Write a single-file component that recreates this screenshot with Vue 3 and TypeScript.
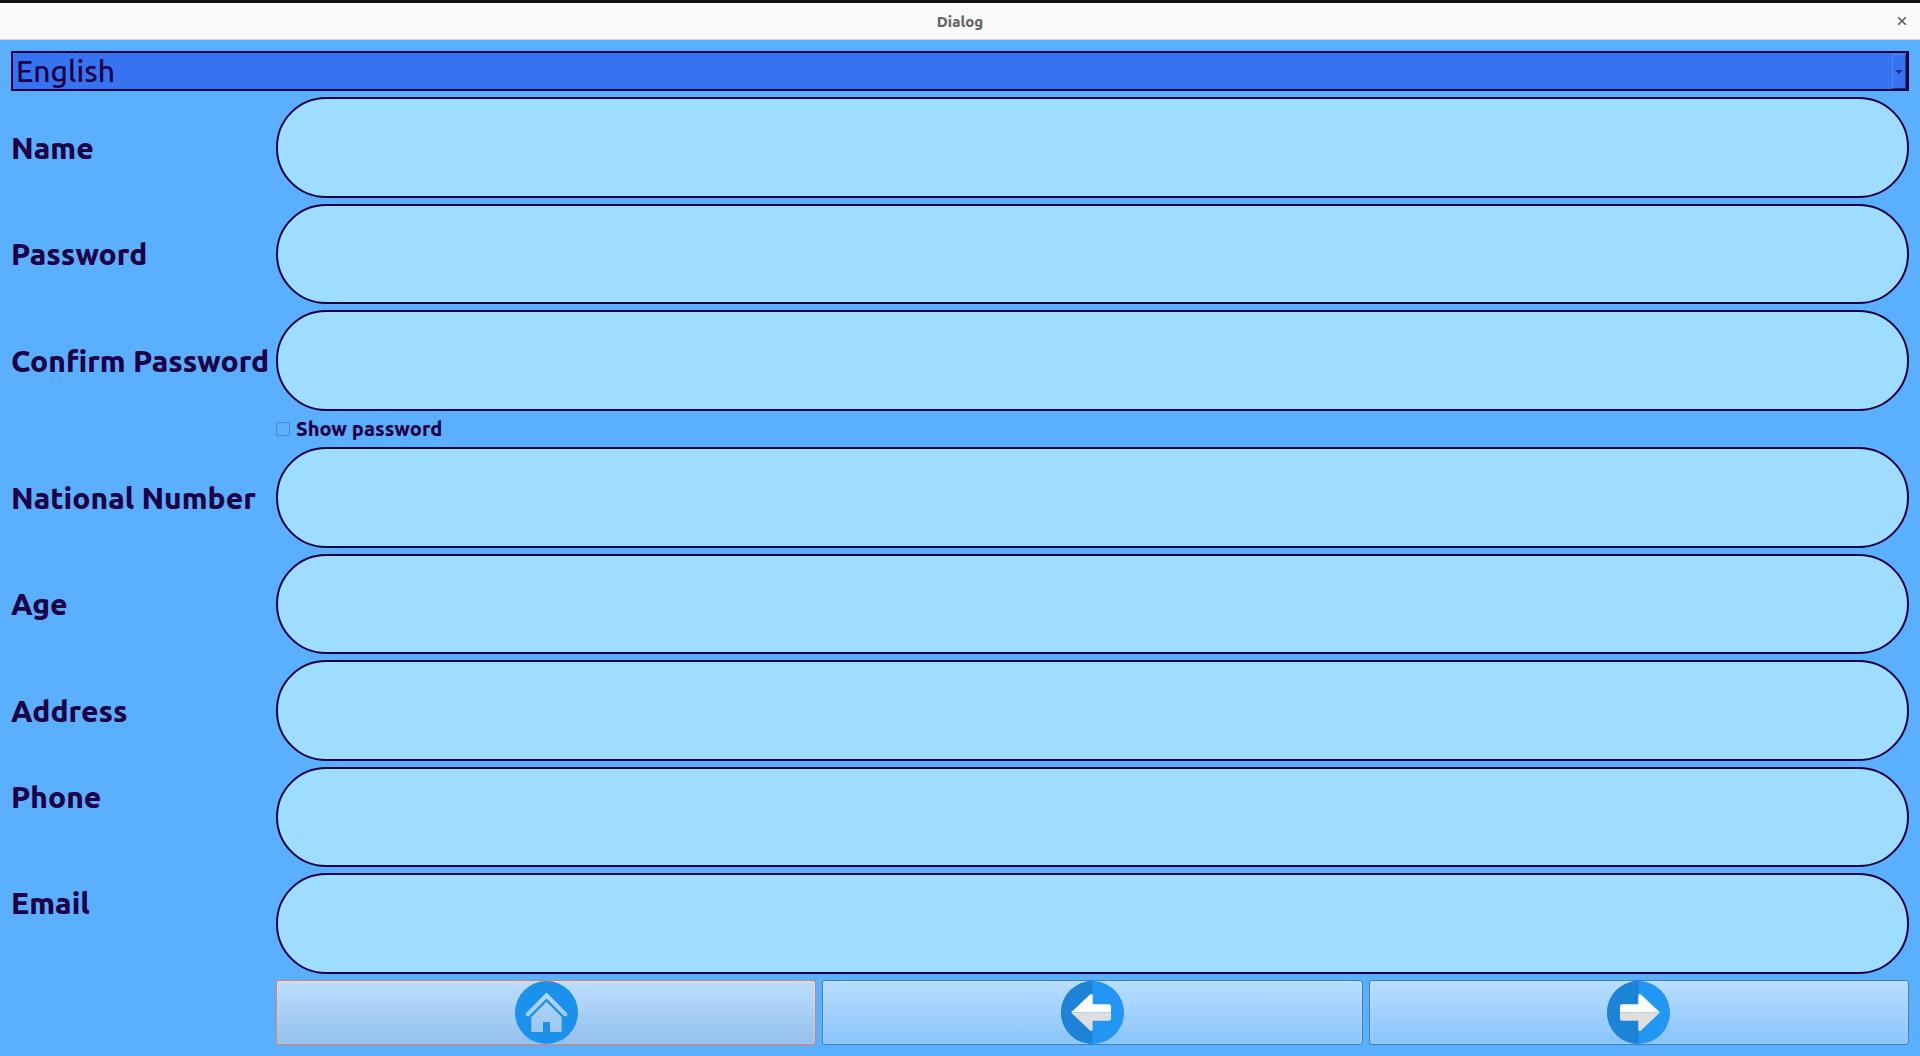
<script setup lang="ts">
import { ref, reactive } from 'vue'

interface Field {
  id: string
  label: string
  secret?: boolean
  raised?: boolean
}

const credentials: Field[] = [
  { id: 'name', label: 'Name' },
  { id: 'password', label: 'Password', secret: true },
  { id: 'confirm', label: 'Confirm Password', secret: true },
]

const details: Field[] = [
  { id: 'national', label: 'National Number' },
  { id: 'age', label: 'Age' },
  { id: 'address', label: 'Address' },
  { id: 'phone', label: 'Phone', raised: true },
  { id: 'email', label: 'Email', raised: true },
]

const language = ref('English')
const showPassword = ref(false)
const values = reactive<Record<string, string>>({})
</script>

<template>
  <div class="window">
    <header class="titlebar">
      <h1 class="title">Dialog</h1>
      <button class="close" type="button" aria-label="Close">
        <svg width="10" height="10" viewBox="0 0 10 10">
          <path d="M1.2 1.2L8.8 8.8M8.8 1.2L1.2 8.8" stroke="#5c5c5c" stroke-width="1.6" />
        </svg>
      </button>
    </header>

    <form class="dialog" @submit.prevent>
      <div class="combo">
        <select v-model="language" class="combo-select" aria-label="Language">
          <option>English</option>
        </select>
        <span class="combo-arrow">
          <svg width="8" height="4" viewBox="0 0 8 4"><path d="M0 0H8L4 4Z" fill="#2a2a86" /></svg>
        </span>
      </div>

      <template v-for="field in credentials" :key="field.id">
        <label class="label" :for="field.id">{{ field.label }}</label>
        <input
          :id="field.id"
          v-model="values[field.id]"
          class="field"
          :type="field.secret && !showPassword ? 'password' : 'text'"
        />
      </template>

      <label class="check">
        <input v-model="showPassword" class="check-box" type="checkbox" />
        <span>Show password</span>
      </label>

      <template v-for="field in details" :key="field.id">
        <label class="label" :class="{ raised: field.raised }" :for="field.id">{{ field.label }}</label>
        <input :id="field.id" v-model="values[field.id]" class="field" type="text" />
      </template>

      <div class="actions">
        <button class="action focused" type="button" aria-label="Home">
          <svg class="icon" viewBox="0 0 63 63">
            <defs>
              <linearGradient id="house" gradientUnits="userSpaceOnUse" x1="0" y1="0" x2="0" y2="63">
                <stop offset="0" stop-color="#bbdcff" />
                <stop offset="1" stop-color="#95c1ee" />
              </linearGradient>
            </defs>
            <circle cx="31.5" cy="31.5" r="31.5" fill="#1a91eb" />
            <path
              d="M12.8 33.2L31.5 14.5L50.2 33.2"
              fill="none"
              stroke="url(#house)"
              stroke-width="4.2"
              stroke-linecap="round"
            />
            <path d="M31.5 20.7L46.7 35.9V51H35V41H28V51H16.3V35.9Z" fill="url(#house)" />
          </svg>
        </button>
        <button class="action" type="button" aria-label="Back">
          <svg class="icon" viewBox="0 0 63 63">
            <circle cx="31.5" cy="31.5" r="31.5" fill="#2196f3" />
            <path d="M31.5 0A31.5 31.5 0 0 0 31.5 63Z" fill="#1d83d6" />
            <path d="M10 31.5L29 13.6Q31.7 12 31.7 15V23.2H48Q50 23.2 50 25.2V31.5Z" fill="#fff" />
            <path d="M10 31.5L29 49.4Q31.7 51 31.7 48V39.8H48Q50 39.8 50 37.8V31.5Z" fill="#dedede" />
          </svg>
        </button>
        <button class="action" type="button" aria-label="Next">
          <svg class="icon" viewBox="0 0 63 63">
            <circle cx="31.5" cy="31.5" r="31.5" fill="#2196f3" />
            <path d="M31.5 0A31.5 31.5 0 0 0 31.5 63Z" fill="#1d83d6" />
            <path d="M53 31.5L34 13.6Q31.3 12 31.3 15V23.2H15Q13 23.2 13 25.2V31.5Z" fill="#fff" />
            <path d="M53 31.5L34 49.4Q31.3 51 31.3 48V39.8H15Q13 39.8 13 37.8V31.5Z" fill="#dedede" />
          </svg>
        </button>
      </div>
    </form>
  </div>
</template>

<style>
body {
  margin: 0;
  background: #5ab0ff;
}
</style>

<style scoped>
.window {
  display: flex;
  flex-direction: column;
  min-height: 100vh;
  box-sizing: border-box;
  border-top: 3px solid #121212;
  background: #5ab0ff;
  color: #1e0046;
  font-family: Ubuntu, "Noto Sans", sans-serif;
}

.titlebar {
  display: grid;
  grid-template-columns: 1fr auto 1fr;
  align-items: center;
  height: 36px;
  padding: 0 13px;
  border-bottom: 1px solid #d5d5d5;
  background: #fafafa;
}

.title {
  grid-column: 2;
  margin: 0;
  padding-top: 2px;
  color: #646464;
  font-size: 15px;
  line-height: 20px;
  font-weight: 800;
}

.close {
  display: flex;
  justify-self: end;
  padding: 0;
  border: 0;
  background: none;
}

.dialog {
  flex: 1;
  display: grid;
  grid-template-columns: 259px 1fr;
  grid-template-rows: 40px repeat(3, minmax(60px, 1fr)) 24px repeat(5, minmax(60px, 1fr)) 65px;
  gap: 6px;
  padding: 11px;
}

.combo {
  grid-column: 1 / -1;
  position: relative;
}

.combo-select {
  appearance: none;
  display: block;
  width: 100%;
  height: 100%;
  box-sizing: border-box;
  padding: 0 3px;
  border: 2px solid #1e0046;
  border-right-width: 3px;
  border-radius: 0;
  outline: 0;
  background: #3673f0;
  color: #1e0046;
  font: 500 30px/36px Ubuntu, "Noto Sans", sans-serif;
}

.combo-arrow {
  position: absolute;
  top: 3px;
  right: 3px;
  bottom: 2px;
  width: 12px;
  display: flex;
  align-items: center;
  justify-content: center;
  border: 1px solid #4f8bff;
  border-right-color: #1f4590;
  border-bottom-color: #1f3070;
  pointer-events: none;
}

.label {
  align-self: center;
  padding-top: 1px;
  font-size: 30px;
  line-height: 36px;
  font-weight: 800;
  white-space: nowrap;
}

.label.raised {
  align-self: start;
  padding-top: 12px;
}

.field {
  min-width: 0;
  min-height: 0;
  box-sizing: border-box;
  padding: 0 24px;
  border: 2px solid #1e0046;
  border-radius: 50px;
  outline: 0;
  background: #9eddff;
  color: #1e0046;
  font: 500 30px/36px Ubuntu, "Noto Sans", sans-serif;
}

.check {
  grid-column: 2;
  justify-self: start;
  display: flex;
  align-items: center;
  gap: 6px;
  font-size: 20px;
  line-height: 24px;
  font-weight: 800;
}

.check-box {
  appearance: none;
  width: 14px;
  height: 14px;
  margin: 0;
  border: 1px solid #478fd2;
  border-radius: 1px;
}

.check-box:checked {
  background: #1e0046;
}

.actions {
  grid-column: 2;
  display: grid;
  grid-template-columns: repeat(3, 1fr);
  gap: 6px;
}

.action {
  display: flex;
  align-items: center;
  justify-content: center;
  padding: 0;
  border: 1px solid #4080b9;
  border-radius: 3px;
  background: linear-gradient(#b9ddff, #8ac5fb);
  box-shadow: inset 0 0 0 1px rgba(255, 255, 255, 0.15);
}

.action.focused {
  border-color: #f27950;
  background: linear-gradient(#bcdeff, #94c0ec);
}

.icon {
  width: 63px;
  height: 63px;
}
</style>
